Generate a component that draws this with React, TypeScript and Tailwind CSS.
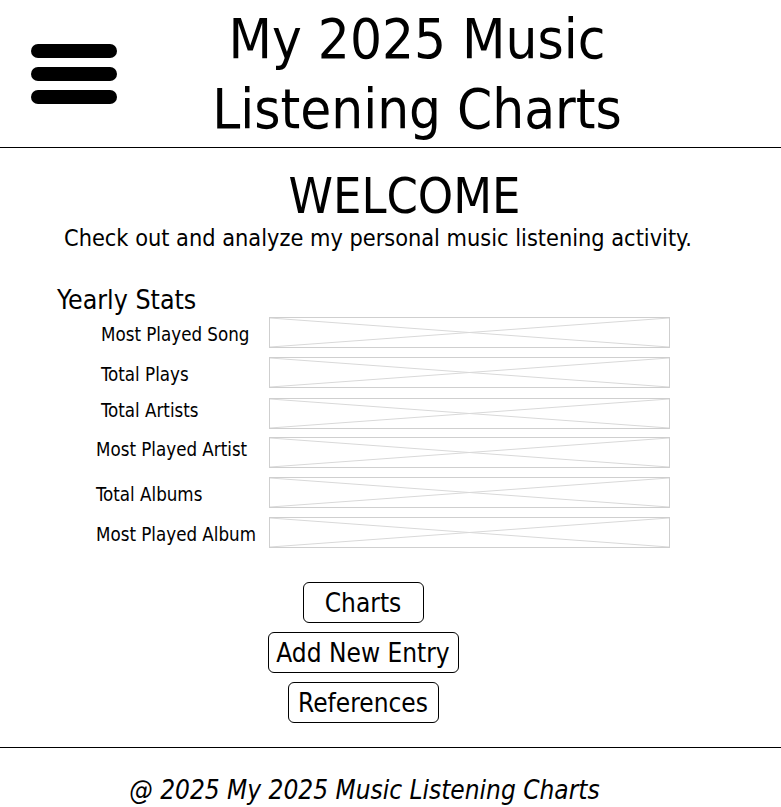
import React from "react";

const Placeholder = () => (
  <div className="relative w-[401px] h-[31px] border border-[#cfcfcf] bg-white">
    <svg className="absolute inset-0 w-full h-full" viewBox="0 0 100 100" preserveAspectRatio="none">
      <line x1="0" y1="0" x2="100" y2="100" stroke="#d9d9d9" strokeWidth="1" vectorEffect="non-scaling-stroke" />
      <line x1="100" y1="0" x2="0" y2="100" stroke="#d9d9d9" strokeWidth="1" vectorEffect="non-scaling-stroke" />
    </svg>
  </div>
);

const rows: { label: string; pl: string; mt: string; shift: string }[] = [
  { label: "Most Played Song", pl: "pl-[101px]", mt: "mt-0", shift: "pt-[5px]" },
  { label: "Total Plays", pl: "pl-[101px]", mt: "mt-[9px]", shift: "pt-[5px]" },
  { label: "Total Artists", pl: "pl-[101px]", mt: "mt-[10px]", shift: "pb-[5px]" },
  { label: "Most Played Artist", pl: "pl-[96px]", mt: "mt-[8px]", shift: "pb-[5px]" },
  { label: "Total Albums", pl: "pl-[96px]", mt: "mt-[9px]", shift: "pt-[5px]" },
  { label: "Most Played Album", pl: "pl-[96px]", mt: "mt-[9px]", shift: "pt-[5px]" },
];

export default function App() {
  return (
    <div className="w-[781px] h-[807px] bg-white text-black overflow-hidden" style={{ fontFamily: '"DejaVu Sans Condensed", "DejaVu Sans", sans-serif' }}>
      <header className="flex items-center h-[148px] border-b border-black">
        <div className="ml-[31px] flex flex-col gap-[9px]">
          <div className="w-[86px] h-[14px] rounded-full bg-black" />
          <div className="w-[86px] h-[14px] rounded-full bg-black" />
          <div className="w-[86px] h-[14px] rounded-full bg-black" />
        </div>
        <h1 className="flex-1 pr-[64px] text-center text-[56px] leading-[70px] font-normal">
          My 2025 Music
          <br />
          Listening Charts
        </h1>
      </header>
      <main className="flex flex-col">
        <h2 className="mt-[20px] text-center pl-[28px] text-[50px] leading-[56px]">WELCOME</h2>
        <p className="pl-[64px] text-[23.3px] leading-[28px]">Check out and analyze my personal music listening activity.</p>
        <h3 className="mt-[32px] pl-[57px] text-[26.5px] leading-[32px]">Yearly Stats</h3>
        <div className="mt-[1px] flex flex-col">
          {rows.map((r) => (
            <div key={r.label} className={`flex items-center ${r.mt}`}>
              <div className={`w-[269px] ${r.pl} ${r.shift} text-[18.6px] leading-[22px]`}>{r.label}</div>
              <Placeholder />
            </div>
          ))}
        </div>
        <div className="mt-[34px] flex flex-col items-center gap-[9px] ml-[-55px]">
          <button className="w-[121px] h-[41px] rounded-[6px] border border-black text-[26px] leading-none">Charts</button>
          <button className="w-[191px] h-[41px] rounded-[6px] border border-black text-[26px] leading-none">Add New Entry</button>
          <button className="w-[151px] h-[41px] rounded-[6px] border border-black text-[26px] leading-none">References</button>
        </div>
        <div className="mt-[24px] border-t border-black" />
        <footer className="mt-[26px] text-center italic text-[26px] leading-[32px] pr-[52px]">@ 2025 My 2025 Music Listening Charts</footer>
      </main>
    </div>
  );
}
